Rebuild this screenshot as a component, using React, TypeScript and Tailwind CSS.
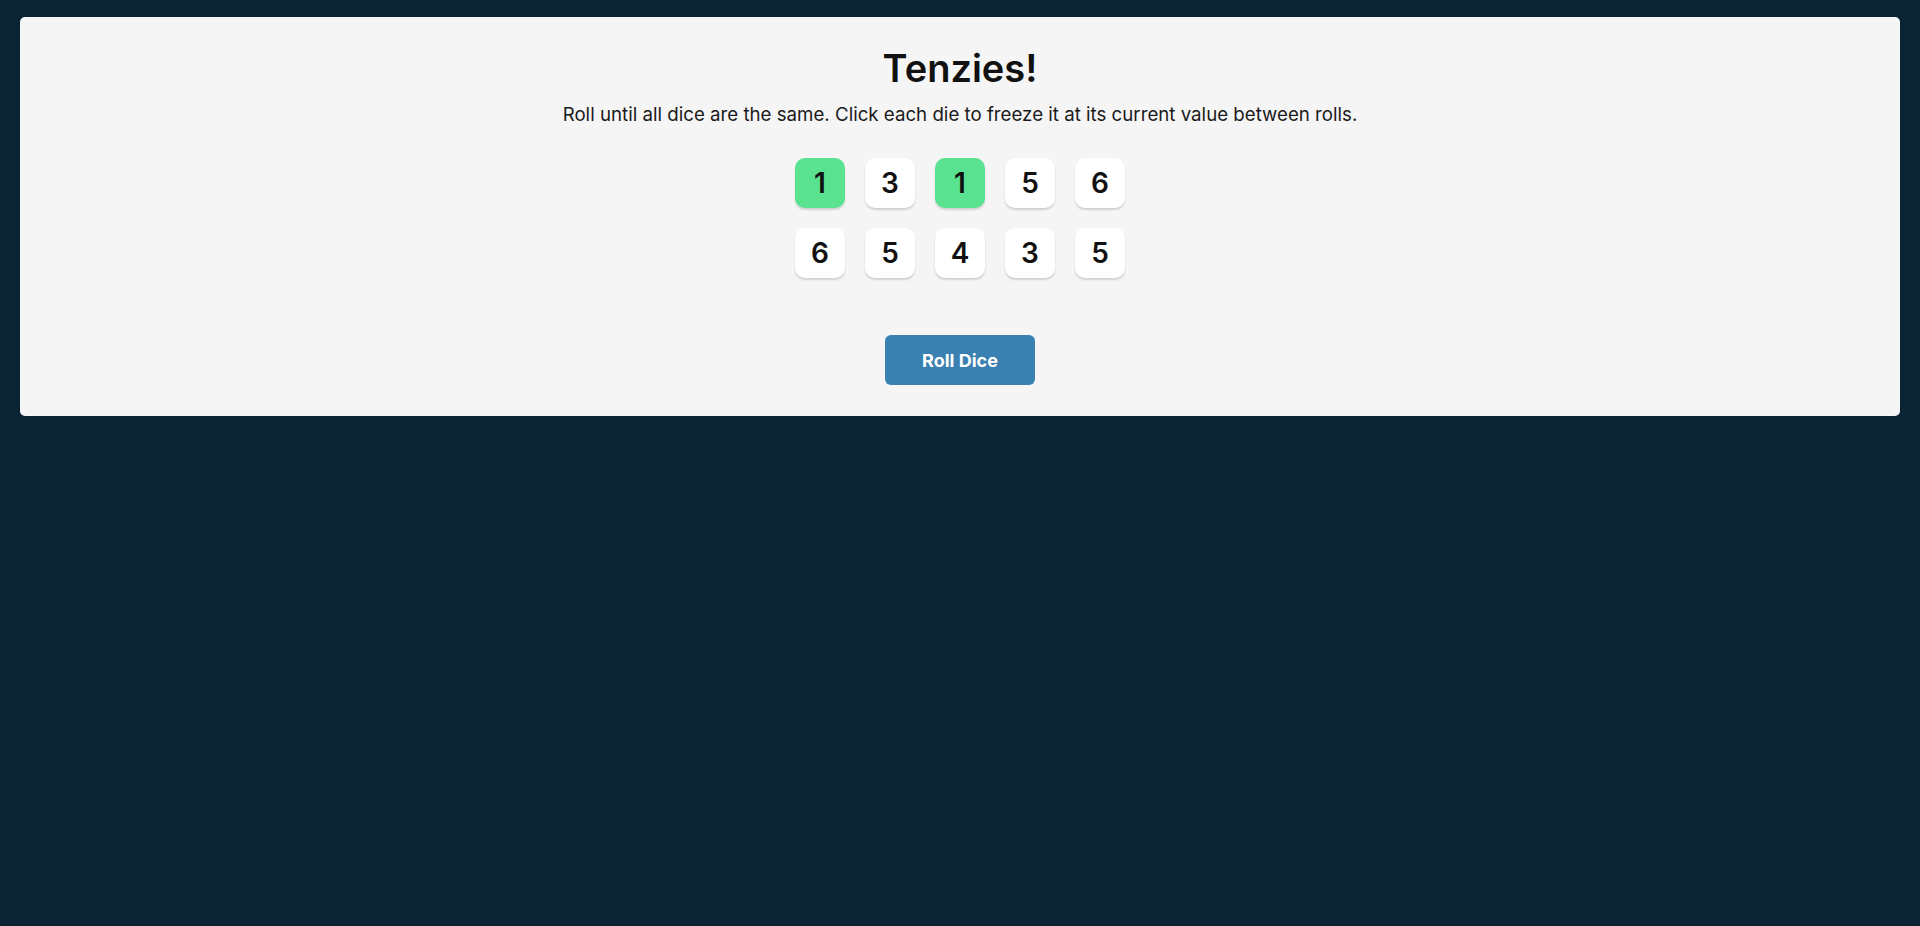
import { useState } from "react";

type Die = { value: number; held: boolean };

const startDice: Die[] = [
  { value: 1, held: true },
  { value: 3, held: false },
  { value: 1, held: true },
  { value: 5, held: false },
  { value: 6, held: false },
  { value: 6, held: false },
  { value: 5, held: false },
  { value: 4, held: false },
  { value: 3, held: false },
  { value: 5, held: false },
];

function App() {
  const [dice, setDice] = useState<Die[]>(startDice);

  const hold = (idx: number) =>
    setDice((prev) =>
      prev.map((d, i) => (i === idx ? { ...d, held: !d.held } : d))
    );

  const roll = () =>
    setDice((prev) =>
      prev.map((d) =>
        d.held ? d : { ...d, value: Math.ceil(Math.random() * 6) }
      )
    );

  return (
    <div className="min-h-[926px] bg-[#0b2434] px-5 pt-[17px] font-['Inter',sans-serif]">
      <main className="flex h-[399px] flex-col items-center rounded-[5px] bg-[#f5f5f5] pt-[27px]">
        <h1 className="text-[38px] font-semibold leading-[48px] text-[#111]">
          Tenzies!
        </h1>
        <p className="mt-[12px] text-[18.7px] leading-[22px] text-[#1a1a1a]">
          Roll until all dice are the same. Click each die to freeze it at its
          current value between rolls.
        </p>
        <div className="mt-[32px] grid grid-cols-5 gap-5">
          {dice.map((d, idx) => (
            <button
              key={idx}
              onClick={() => hold(idx)}
              className={
                "flex h-[50px] w-[50px] items-center justify-center rounded-[10px] text-[28px] font-semibold text-[#111] shadow-[0_2px_2px_rgba(0,0,0,0.15)] " +
                (d.held ? "bg-[#59e391]" : "bg-white")
              }
            >
              {d.value}
            </button>
          ))}
        </div>
        <button
          onClick={roll}
          className="mt-[57px] h-[50px] w-[150px] rounded-[6px] bg-[#3a80b0] text-[18px] font-bold text-white"
        >
          Roll Dice
        </button>
      </main>
    </div>
  );
}

export default App;
